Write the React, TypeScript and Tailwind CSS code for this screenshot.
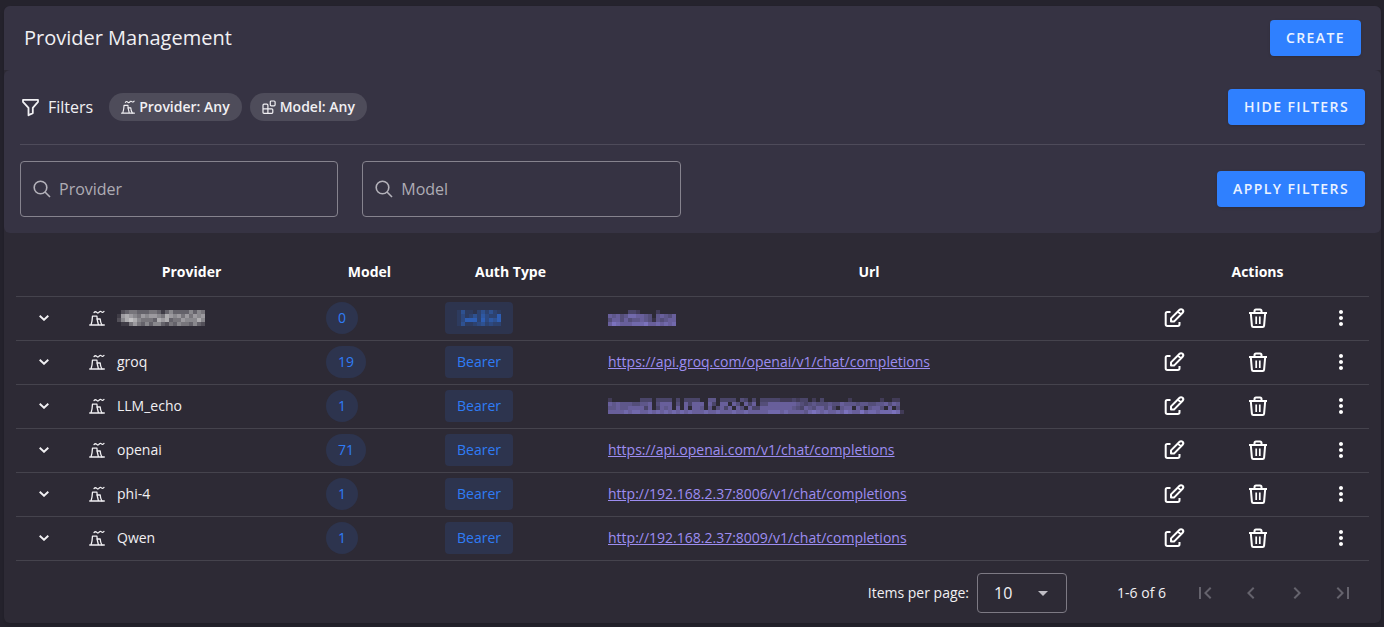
import type { ReactNode } from 'react';
import { MdChevronLeft, MdChevronRight, MdFirstPage, MdLastPage, MdMoreVert, MdArrowDropDown } from 'react-icons/md';

type Provider = {
  id: string;
  name?: string;
  models: number;
  auth?: string;
  url?: string;
  urlMask?: string[];
};

// Opacity grids (0-9) for redacted values, one digit per 4px cell
const nameMask = [
  '0234433344313533335354',
  '1676546566547656464656',
  '2578754443767344655575',
  '0114643535532435443532',
];

const authMask = [
  '14110242421',
  '13124253226',
  '13666263546',
  '14112342322',
];

const shortUrlMask = [
  '00000332000020000',
  '65645776654056546',
  '46646455654154566',
  '68766677786676767',
];

const longUrlMask = [
  '20000000333033330303333005503333043030333332223233020300000020000000200220',
  '65655544556046660406366606306606406360446666666543454445446555455445564650',
  '55655666636036560606066505046360640633666666665436546646305660640566406040',
  '66667677667676767676766676676667667666667776766665787676676876686776777872',
];

const providers: Provider[] = [
  { id: 'hidden', models: 0, urlMask: shortUrlMask },
  { id: 'groq', name: 'groq', models: 19, auth: 'Bearer', url: 'https://api.groq.com/openai/v1/chat/completions' },
  { id: 'llm-echo', name: 'LLM_echo', models: 1, auth: 'Bearer', urlMask: longUrlMask },
  { id: 'openai', name: 'openai', models: 71, auth: 'Bearer', url: 'https://api.openai.com/v1/chat/completions' },
  { id: 'phi-4', name: 'phi-4', models: 1, auth: 'Bearer', url: 'http://192.168.2.37:8006/v1/chat/completions' },
  { id: 'qwen', name: 'Qwen', models: 1, auth: 'Bearer', url: 'http://192.168.2.37:8009/v1/chat/completions' },
];

export default function App() {
  return (
    <div className="bg-[#25232d] pt-1.5 pr-[3px] pb-1 pl-1 font-['Open_Sans',sans-serif] text-sm text-[#f1f0f3]">
      <main className="rounded-md bg-[#2d2a35] shadow-md">
        <header className="flex items-center justify-between rounded-t-md bg-[#363343] px-5 py-3.5">
          <h1 className="text-xl font-medium">Provider Management</h1>
          <PrimaryButton>Create</PrimaryButton>
        </header>
        <FiltersPanel />
        <ProvidersTable />
        <Pagination />
      </main>
    </div>
  );
}

function PrimaryButton({ children }: { children: ReactNode }) {
  return (
    <button
      type="button"
      className="h-9 rounded bg-[#2f80ff] px-4 text-sm font-semibold tracking-widest whitespace-nowrap text-[#ebf2ff] uppercase shadow"
    >
      {children}
    </button>
  );
}

function FiltersPanel() {
  return (
    <section className="rounded-md bg-[#363343] px-4 pb-4">
      <div className="flex h-[75px] items-center border-b border-[#4e4b5a]">
        <FunnelIcon />
        <h2 className="ml-2 text-base font-medium">Filters</h2>
        <div className="ml-4 flex gap-2">
          <Chip icon={<PlantIcon className="size-3.5" />}>Provider: Any</Chip>
          <Chip icon={<BlocksIcon />}>Model: Any</Chip>
        </div>
        <div className="ml-auto">
          <PrimaryButton>Hide filters</PrimaryButton>
        </div>
      </div>
      <div className="mt-4 grid grid-cols-4 items-center gap-6">
        <SearchField label="Provider" />
        <SearchField label="Model" />
        <div className="col-span-2 justify-self-end">
          <PrimaryButton>Apply filters</PrimaryButton>
        </div>
      </div>
    </section>
  );
}

function Chip({ icon, children }: { icon: ReactNode; children: ReactNode }) {
  return (
    <span className="flex h-7 items-center gap-1 rounded-full bg-[#4e4c5a] px-3 font-semibold">
      {icon}
      {children}
    </span>
  );
}

function SearchField({ label }: { label: string }) {
  return (
    <label className="flex h-14 items-center gap-2 rounded border border-[#86838e] px-3 text-[#b4b2ba]">
      <svg viewBox="0 0 18 18" className="size-[18px] shrink-0" fill="none" stroke="currentColor" strokeWidth="1.6">
        <circle cx="7.5" cy="7.5" r="6.3" />
        <path d="M12 12l5 5" />
      </svg>
      <input
        type="text"
        aria-label={label}
        placeholder={label}
        className="w-full min-w-0 bg-transparent text-base outline-none placeholder:text-[#aeacb4]"
      />
    </label>
  );
}

function ProvidersTable() {
  return (
    <div className="px-3 pt-4">
      <table className="w-full table-fixed border-collapse">
        <colgroup>
          <col className="w-[57px]" />
          <col className="w-[237px]" />
          <col className="w-[119px]" />
          <col className="w-[163px]" />
          <col />
          <col className="w-[223px]" />
        </colgroup>
        <thead>
          <tr className="h-[47px] border-b border-[#45434d] text-white">
            <th aria-label="Expand" />
            <th className="font-bold">Provider</th>
            <th className="font-bold">Model</th>
            <th className="font-bold">Auth Type</th>
            <th className="font-bold">Url</th>
            <th className="font-bold">Actions</th>
          </tr>
        </thead>
        <tbody>
          {providers.map((provider) => (
            <ProviderRow key={provider.id} provider={provider} />
          ))}
        </tbody>
      </table>
    </div>
  );
}

function ProviderRow({ provider }: { provider: Provider }) {
  return (
    <tr className="h-11 border-b border-[#45434d]">
      <td className="px-4">
        <button type="button" aria-label="Expand row" className="flex size-6 items-center justify-center">
          <svg viewBox="0 0 10 6" className="h-1.5 w-2.5" fill="none" stroke="currentColor" strokeWidth="1.9">
            <path d="M.7.8L5 4.8 9.3.8" />
          </svg>
        </button>
      </td>
      <td className="px-4">
        <div className="flex items-center gap-3">
          <PlantIcon className="size-4" />
          {provider.name ?? <Mosaic rows={nameMask} className="text-[#e6e6e6]" />}
        </div>
      </td>
      <td className="px-4">
        <span className="inline-flex h-8 min-w-8 items-center justify-center rounded-full bg-[#2d344e] px-3 text-[#2f7cf6]">
          {provider.models}
        </span>
      </td>
      <td className="px-4">
        <span className="inline-flex h-8 min-w-[66px] items-center justify-center rounded bg-[#2d344e] px-3 text-[#2f7cf6]">
          {provider.auth ?? <Mosaic rows={authMask} className="text-[#2f7cf6]" />}
        </span>
      </td>
      <td className="px-4">
        {provider.url ? (
          <a href={provider.url} className="text-[#9d8df1] underline">
            {provider.url}
          </a>
        ) : (
          <Mosaic rows={provider.urlMask ?? []} className="text-[#8f84e0]" />
        )}
      </td>
      <td className="px-4">
        <div className="flex items-center justify-between text-white">
          <button type="button" aria-label="Edit">
            <EditIcon />
          </button>
          <button type="button" aria-label="Delete">
            <TrashIcon />
          </button>
          <button type="button" aria-label="More actions">
            <MdMoreVert className="size-6" />
          </button>
        </div>
      </td>
    </tr>
  );
}

function Pagination() {
  return (
    <footer className="flex items-center justify-end pt-3 pr-[15px] pb-2.5">
      <label htmlFor="page-size" className="mr-2 font-medium">
        Items per page:
      </label>
      <div className="relative">
        <select
          id="page-size"
          defaultValue="10"
          className="block h-10 w-[90px] appearance-none rounded border border-[#7d7a84] bg-transparent pl-4 text-base"
        >
          <option value="10">10</option>
          <option value="25">25</option>
          <option value="50">50</option>
        </select>
        <MdArrowDropDown className="pointer-events-none absolute top-2 right-3 size-6 text-[#c0bec5]" />
      </div>
      <span className="mr-4 ml-[50px] font-medium">1-6 of 6</span>
      <div className="flex text-[#65636d]">
        <PageButton label="First page" icon={<MdFirstPage className="size-6" />} />
        <PageButton label="Previous page" icon={<MdChevronLeft className="size-6" />} />
        <PageButton label="Next page" icon={<MdChevronRight className="size-6" />} />
        <PageButton label="Last page" icon={<MdLastPage className="size-6" />} />
      </div>
    </footer>
  );
}

function PageButton({ label, icon }: { label: string; icon: ReactNode }) {
  return (
    <button type="button" disabled aria-label={label} className="flex h-10 w-[46px] items-center justify-center">
      {icon}
    </button>
  );
}

function Mosaic({ rows, className }: { rows: string[]; className: string }) {
  const cols = rows[0]?.length ?? 0;
  return (
    <svg width={cols * 4} height={rows.length * 4} className={className} fill="currentColor" shapeRendering="crispEdges" aria-hidden="true">
      {rows.map((row, y) =>
        [...row].map((level, x) => (
          <rect key={`${x}-${y}`} x={x * 4} y={y * 4} width="4" height="4" opacity={Number(level) / 10} />
        ))
      )}
    </svg>
  );
}

function FunnelIcon() {
  return (
    <svg viewBox="0 0 20 20" className="size-5" fill="none" stroke="currentColor" strokeWidth="1.8" strokeLinejoin="round">
      <path d="M3 2.9h15v2l-5.2 6v5.2l-4.3 2.2v-7.4L3 4.9z" />
    </svg>
  );
}

function PlantIcon({ className }: { className: string }) {
  return (
    <svg viewBox="0 0 16 16" className={className} fill="none" stroke="currentColor" strokeWidth="1.3" strokeLinecap="round" strokeLinejoin="round">
      <path d="M.7 15h14.6M2 15c1.1-3.2 1.4-5.6 1.5-8.9h4.4c.1 2.9.5 5.7 1.6 8.9" />
      <path d="M8 9h3.2c.1 2 .6 4 1.7 6M5 2.6c1-1.2 2-1 2.7-.2.8.9 1.6.7 2.2 0M9.9 2.4c.8-1.3 2-1.2 2.6-.5.7.7 1.6.5 2.5-.5" />
    </svg>
  );
}

function BlocksIcon() {
  return (
    <svg viewBox="0 0 14 14" className="size-3.5" fill="none" stroke="currentColor" strokeWidth="1.2" strokeLinejoin="round">
      <path d="M2 4.2h2.9q1 0 1 1v3.6H1V5.2q0-1 1-1zM1 8.8h4.9v4.5H2q-1 0-1-1zM5.9 8.8h3.9q1 0 1 1v2.5q0 1-1 1H5.9z" />
      <rect x="8.3" y="1" width="4.8" height="4.8" rx="1" />
    </svg>
  );
}

function EditIcon() {
  return (
    <svg viewBox="0 0 24 24" className="size-6" fill="none" stroke="currentColor" strokeWidth="2" strokeLinejoin="round">
      <path d="M8.5 6H5.2Q3.7 6 3.7 7.5v10.8Q3.7 20 5.4 20h10.4q1.7 0 1.7-1.7V16" />
      <path d="M9 15.6v-3.2l8.6-8.6a2 2 0 0 1 3 2.9L12 15.6zM16 5.6l3 2.9" />
    </svg>
  );
}

function TrashIcon() {
  return (
    <svg viewBox="0 0 24 24" className="size-6" fill="none" stroke="currentColor" strokeWidth="2" strokeLinejoin="round">
      <path d="M3 7h18M8.5 6.8V5q0-1.5 1.5-1.5h4q1.5 0 1.5 1.5v1.8M4.8 7l1.1 12.6q.1 1.4 1.5 1.4h9.2q1.4 0 1.5-1.4L19.2 7" />
      <path d="M10.2 10.5V18M13.8 10.5V18" strokeWidth="1.7" />
    </svg>
  );
}
